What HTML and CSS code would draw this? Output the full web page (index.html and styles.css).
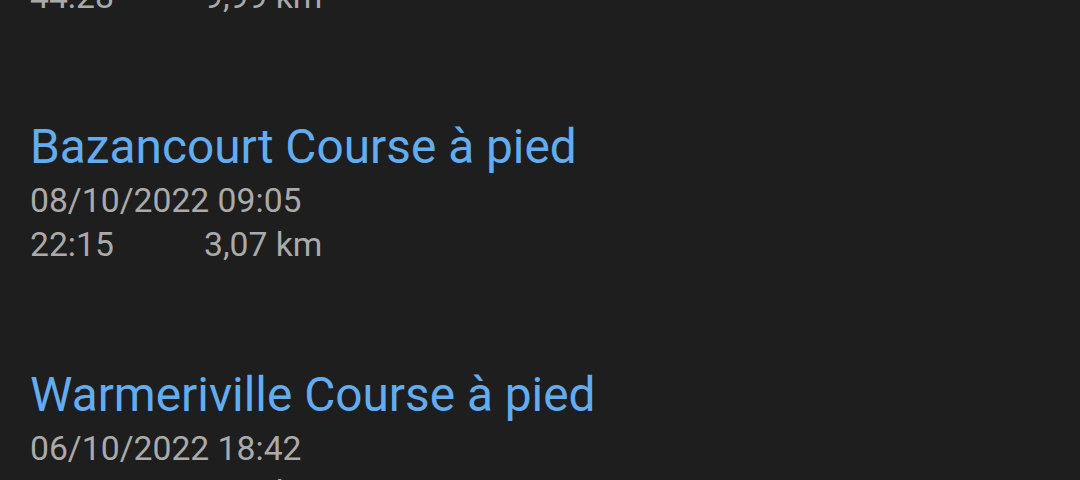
FILE: index.html
```html
<!DOCTYPE html>
<html lang="fr">
<head>
  <meta charset="UTF-8" />
  <meta name="viewport" content="width=device-width, initial-scale=1" />
  <title>Activités</title>
  <link rel="stylesheet" href="styles.css">
</head>
<body>
  <div class="activities">
    <div class="activity">
      <div class="title">Witry-lès-Reims Course à pied</div>
      <div class="date">09/10/2022 10:12</div>
      <div class="stats"><span class="duration">44:28</span><span class="distance">9,99 km</span></div>
    </div>

    <div class="activity">
      <div class="title">Bazancourt Course à pied</div>
      <div class="date">08/10/2022 09:05</div>
      <div class="stats"><span class="duration">22:15</span><span class="distance">3,07 km</span></div>
    </div>

    <div class="activity">
      <div class="title">Warmeriville Course à pied</div>
      <div class="date">06/10/2022 18:42</div>
      <div class="stats"><span class="duration">25:36</span><span class="distance">5,12 km</span></div>
    </div>
  </div>
</body>
</html>
```

FILE: styles.css
```css
html, body {
  margin: 0;
  height: 100%;
  background: #1e1e1e;
  overflow: hidden;
}
body {
  font-family: Roboto, "Noto Sans", sans-serif;
}
/* liste déjà défilée : la première activité dépasse en haut */
.activities {
  margin-top: -180px;
  padding: 0 30px;
}
.activity {
  padding: 49px 0;
}
.title {
  color: #62adf0;
  font-size: 47.8px;
  line-height: 60px;
  padding-bottom: 2px;
}
.date, .stats {
  color: #aaaaaa;
  font-size: 33.7px;
  line-height: 44px;
}
.stats {
  display: flex;
}
.duration {
  width: 174px;
}
```
